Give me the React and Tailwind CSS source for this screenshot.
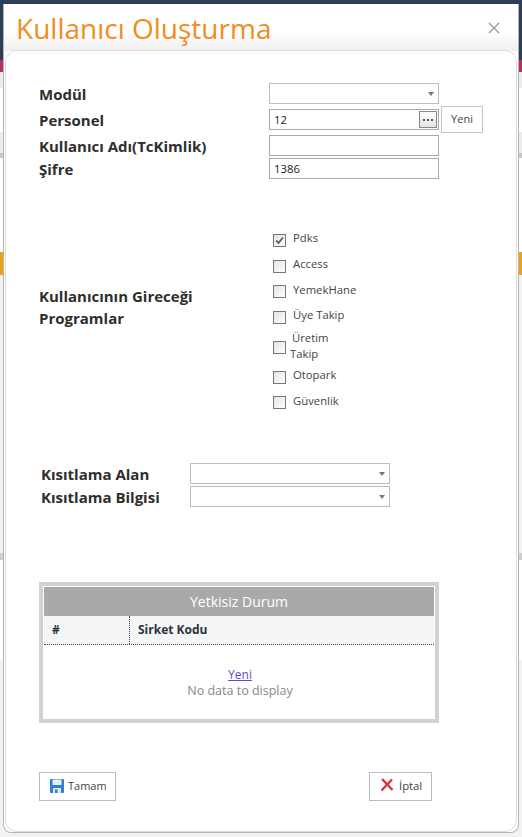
const font = { fontFamily: '"Open Sans", "Noto Sans", sans-serif' };

function Caret() {
  return <span className="w-0 h-0 border-l-[3.5px] border-r-[3.5px] border-t-[4px] border-l-transparent border-r-transparent border-t-[#777] mr-[2px] mt-[1px]" />;
}

function Select({ w }) {
  return (
    <div className={`${w} h-[21px] border border-[#bdbdbd] bg-white flex items-center justify-end pr-[2px]`}>
      <Caret />
    </div>
  );
}

function Input({ value, children }) {
  return (
    <div className="w-[170px] h-[21px] border border-[#a9a9a9] bg-white flex items-center justify-between pl-[4px] pr-[1px] text-[11.3px] text-[#222]">
      <span className="mt-[1px]">{value}</span>
      {children}
    </div>
  );
}

function Label({ children, className = "" }) {
  return <div className={`text-[15px] font-bold text-[#2e2e2e] leading-[21px] pt-[2px] ${className}`}>{children}</div>;
}

function Check({ label, checked, h = "h-[25.7px]", two }) {
  return (
    <div className={`flex ${h} items-center`}>
      <span className="w-[13px] h-[13px] border border-[#777] bg-gradient-to-br from-[#e4e4e4] to-white flex items-center justify-center shrink-0">
        {checked && (
          <svg width="9" height="9" viewBox="0 0 9 9">
            <path d="M1 4.5 L3.5 7 L8 1.5" fill="none" stroke="#555" strokeWidth="1.6" />
          </svg>
        )}
      </span>
      {two ? (
        <div className="text-[11.3px] leading-[16px] text-[#444] -mt-[3px]">
          <div className="pl-[6px]">Üretim</div>
          <div className="pl-[4px]">Takip</div>
        </div>
      ) : (
        <span className="text-[11.3px] text-[#444] ml-[7px] -mt-[3px]">{label}</span>
      )}
    </div>
  );
}

function Band({ h, bg }) {
  return <div className={`${h} ${bg} w-full`} />;
}

export default function App() {
  return (
    <div className="relative w-[522px] h-[837px] overflow-hidden bg-[#f2f2f2]" style={font}>
      <Band h="h-[60px]" bg="bg-[#2c3e58]" />
      <Band h="h-[12px]" bg="bg-[#b8305f]" />
      <Band h="h-[16px]" bg="bg-[#ececec]" />
      <Band h="h-[44px]" bg="bg-white" />
      <Band h="h-[21px]" bg="bg-[#ececec]" />
      <Band h="h-[5px]" bg="bg-[#c8c8c8]" />
      <Band h="h-[94px]" bg="bg-white" />
      <Band h="h-[23px]" bg="bg-[#f0a010]" />
      <Band h="h-[278px]" bg="bg-[#f2f2f2]" />
      <Band h="h-[7px]" bg="bg-[#cfcfcf]" />
      <Band h="h-[100px]" bg="bg-white" />

      <div className="absolute left-[3px] top-[4px] w-[516px] h-[829px] bg-white border-x border-b border-[#b4b4b4] rounded-b-lg flex flex-col">
        <div className="h-[47px] bg-gradient-to-b from-white from-60% to-[#efefef] flex items-start justify-between pl-[12px] pr-[18px] shrink-0">
          <h1 className="text-[28px] leading-[35px] mt-[7px] text-[#f28c1e] font-normal">Kullanıcı Oluşturma</h1>
          <svg width="12" height="12" viewBox="0 0 12 12" className="mt-[18px]">
            <path d="M1 1 L11 11 M11 1 L1 11" stroke="#9a9a9a" strokeWidth="1.4" />
          </svg>
        </div>

        <div className="flex-1 -mt-[1px] ml-[1px] mr-[1px] bg-white border border-[#dcdcdc] rounded-xl pl-[33px] pt-[32px]">
          <div className="flex items-center h-[21px]">
            <Label className="w-[230px]">Modül</Label>
            <Select w="w-[170px]" />
          </div>
          <div className="flex items-center h-[21px] mt-[5px]">
            <Label className="w-[230px]">Personel</Label>
            <Input value="12">
              <span className="w-[18px] h-[17px] border border-[#888] bg-gradient-to-b from-white to-[#e4e4e4] flex items-center justify-center gap-[2px]">
                <i className="w-[2px] h-[2px] bg-[#555]" />
                <i className="w-[2px] h-[2px] bg-[#555]" />
                <i className="w-[2px] h-[2px] bg-[#555]" />
              </span>
            </Input>
            <button className="w-[42px] h-[27px] ml-[2px] border border-[#c4c4c4] bg-white text-[11px] text-[#444]">Yeni</button>
          </div>
          <div className="flex items-center h-[21px] mt-[5px]">
            <Label className="w-[230px]">Kullanıcı Adı(TcKimlik)</Label>
            <Input value="" />
          </div>
          <div className="flex items-center h-[21px] mt-[2px]">
            <Label className="w-[230px]">Şifre</Label>
            <Input value="1386" />
          </div>

          <div className="flex items-start mt-[49px] h-[188px]">
            <Label className="w-[234px] leading-[22px] mt-[55px]">
              Kullanıcının Gireceği
              <br />
              Programlar
            </Label>
            <div className="flex flex-col -mt-[0.5px]">
              <Check label="Pdks" checked />
              <Check label="Access" />
              <Check label="YemekHane" />
              <Check label="Üye Takip" />
              <Check two h="h-[34px]" />
              <Check label="Otopark" />
              <Check label="Güvenlik" />
            </div>
          </div>

          <div className="flex items-center h-[21px] mt-[47px] pl-[2px]">
            <Label className="w-[149px]">Kısıtlama Alan</Label>
            <Select w="w-[200px]" />
          </div>
          <div className="flex items-center h-[21px] mt-[2px] pl-[2px]">
            <Label className="w-[149px]">Kısıtlama Bilgisi</Label>
            <Select w="w-[200px]" />
          </div>

          <div className="w-[400px] h-[141px] mt-[75px] border-[4px] border-[#d2d2d2] bg-white p-[1px] flex flex-col">
            <div className="h-[29px] bg-[#a9a9a9] text-white text-[14px] flex items-center justify-center shrink-0">Yetkisiz Durum</div>
            <div className="h-[29px] bg-[#f3f5f6] border-b border-dotted border-[#444] flex text-[12px] font-bold text-[#2a3440] shrink-0">
              <div className="w-[86px] pl-[8px] border-r border-dotted border-[#444] flex items-center">#</div>
              <div className="pl-[8px] flex items-center">Sirket Kodu</div>
            </div>
            <div className="flex-1 flex flex-col items-center pt-[22px] pl-[2px] text-[12.5px] leading-[16px]">
              <a className="text-[#5a50c8] underline text-[12px]">Yeni</a>
              <span className="text-[#888]">No data to display</span>
            </div>
          </div>

          <div className="flex justify-between w-[393px] mt-[49px]">
            <button className="w-[77px] h-[29px] border border-[#bdbdbd] bg-white flex items-center pl-[10px] gap-[4px] text-[11px] text-[#444]">
              <svg width="14" height="14" viewBox="0 0 14 14" className="-mt-[2px]">
                <path d="M1 0 H13 Q14 0 14 1 V13 Q14 14 13 14 H1 Q0 14 0 13 V1 Q0 0 1 0 Z" fill="#2f7fd6" />
                <rect x="2.5" y="0.5" width="9" height="5.5" fill="#e6eef6" />
                <rect x="3" y="9" width="8" height="5" fill="#dfe6ee" />
                <rect x="5" y="10.5" width="2.5" height="3.5" fill="#2f7fd6" />
              </svg>
              Tamam
            </button>
            <button className="w-[63px] h-[29px] border border-[#bdbdbd] bg-white flex items-center pl-[10px] gap-[5px] text-[11.3px] text-[#444]">
              <svg width="14" height="14" viewBox="0 0 14 14" className="-mt-[3px]">
                <path d="M2 1 L12.5 12 M12 1.5 L1.5 12.5" stroke="#d9303a" strokeWidth="2.4" />
              </svg>
              İptal
            </button>
          </div>
        </div>
      </div>
    </div>
  );
}
